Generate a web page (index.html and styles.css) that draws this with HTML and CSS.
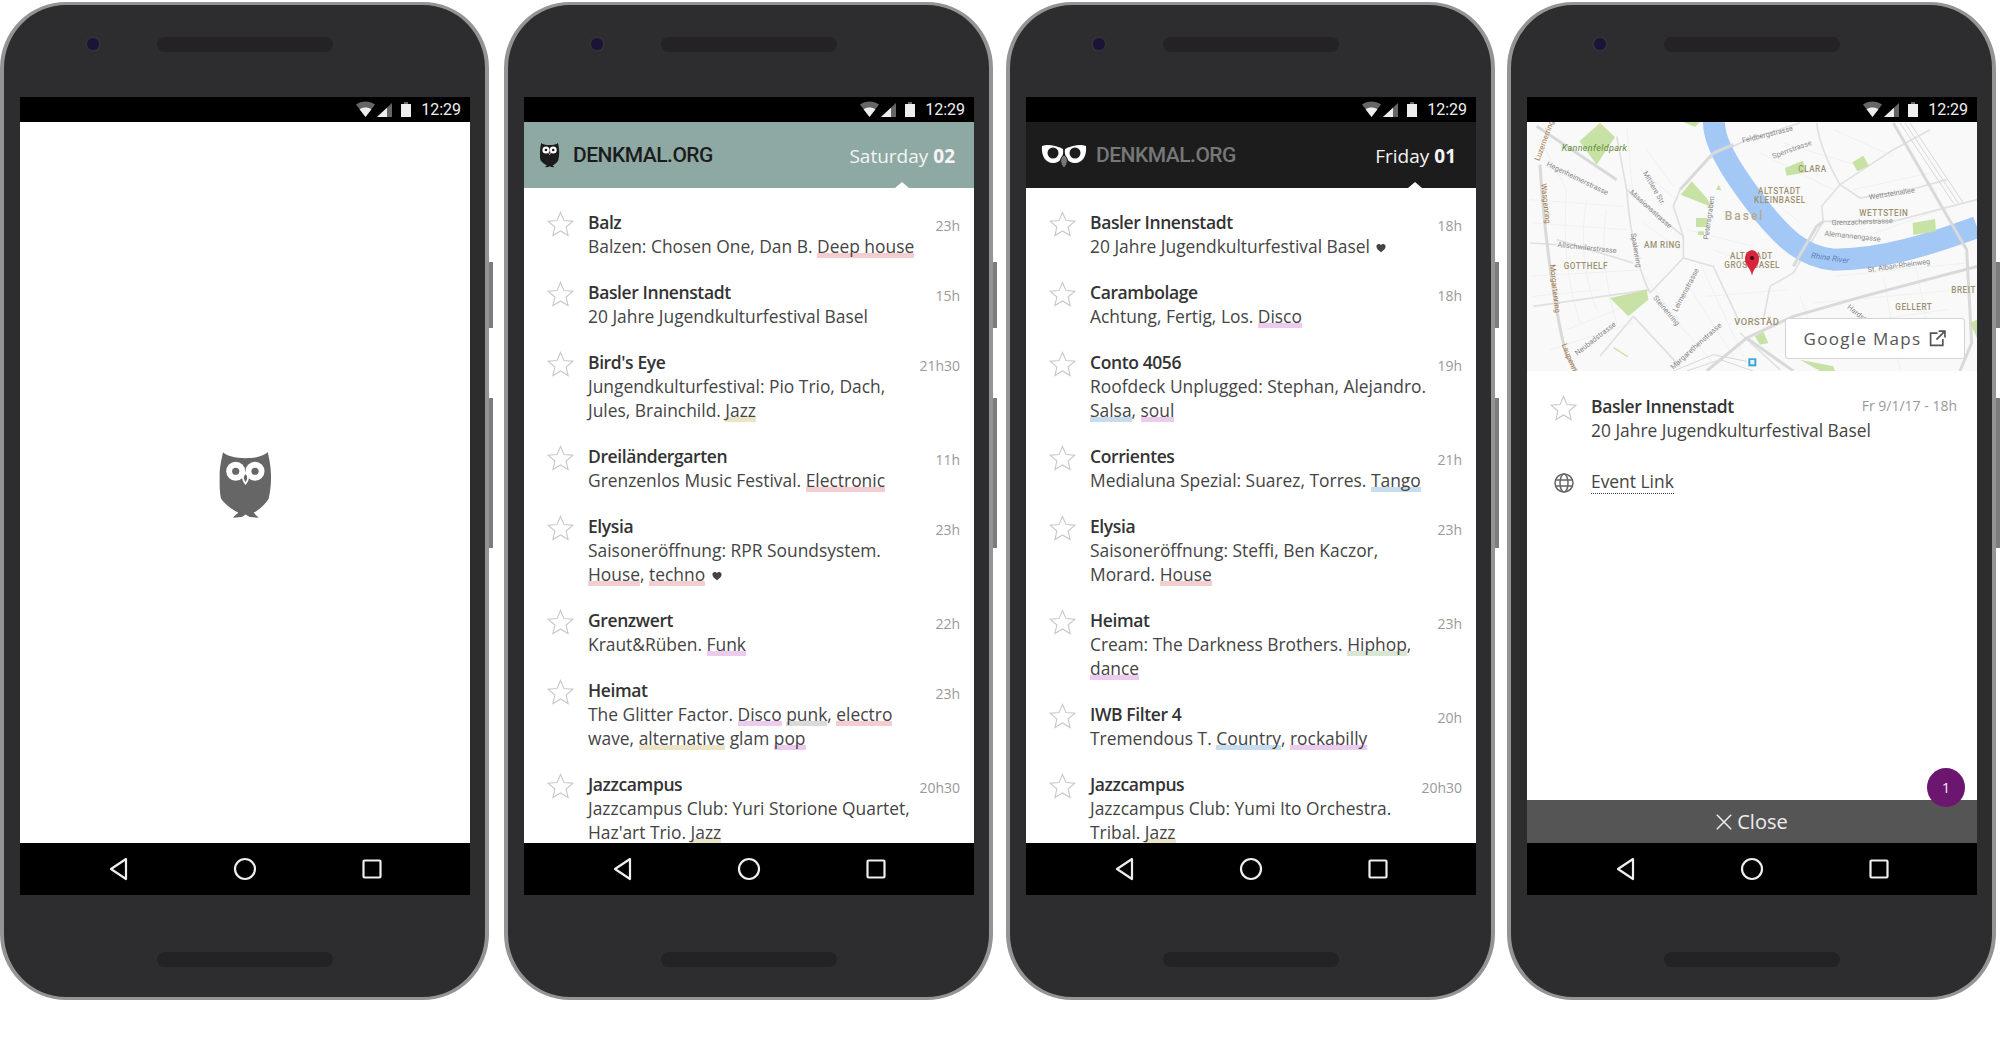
FILE: index.html
```html
<!DOCTYPE html>
<html lang="en">
<head>
<meta charset="utf-8">
<title>Denkmal.org</title>
<link rel="stylesheet" href="styles.css">
</head>
<body>
<svg class="defs" width="0" height="0" aria-hidden="true">
  <defs>
    <symbol id="star" viewBox="0 0 27 26">
      <path class="star-line" d="M13.5 1.5 L17 9.6 L25.7 10.3 L19.1 16 L21.1 24.5 L13.5 20 L5.9 24.5 L7.9 16 L1.3 10.3 L10 9.6 Z"/>
    </symbol>
    <symbol id="heart" viewBox="0 0 10 10">
      <path class="heart-fill" d="M5 9.2 C3 7.6 .4 5.8 .4 3.4 C.4 1.8 1.6 .9 2.8 .9 C3.8 .9 4.6 1.4 5 2.3 C5.4 1.4 6.2 .9 7.2 .9 C8.4 .9 9.6 1.8 9.6 3.4 C9.6 5.8 7 7.6 5 9.2 Z"/>
    </symbol>
    <symbol id="status" viewBox="0 0 56 18">
      <path class="st-dim" d="M0 3.6 C5.5 -.6 13.5 -.6 19 3.6 L9.5 16 Z"/>
      <path class="st-on" d="M3.6 8.2 C7 5.8 12 5.8 15.4 8.2 L9.5 16 Z"/>
      <path class="st-dim" d="M21 16 L36 2 L36 16 Z"/>
      <path class="st-on" d="M21 16 L31 6.7 L31 16 Z"/>
      <path class="st-dim" d="M48 1 H52 V3 H48 Z"/>
      <path class="st-on" d="M45 3 H55 V16 H45 Z"/>
    </symbol>
    <symbol id="owl" viewBox="0 0 180 220">
      <path d="M18 7 C30 18 55 25 87 25 C120 25 142 18 155 7 C160 30 165 52 165 82 C165 110 162 130 158 148 C146 168 128 182 112 192 C118 198 124 202 127 207 L100 205 L87 197 L76 205 L49 207 C53 201 59 197 65 192 C46 182 24 166 12 148 C7 125 8 100 8 80 C8 50 14 30 18 7 Z"/>
      <circle class="owl-white" cx="57" cy="65" r="29"/>
      <circle class="owl-white" cx="116" cy="65" r="29"/>
      <circle class="owl-pupil" cx="57" cy="65" r="11"/>
      <circle class="owl-pupil" cx="116" cy="65" r="11"/>
      <path class="owl-beak" d="M87 103 C78 92 76 80 87 70 C98 80 96 92 87 103 Z"/>
    </symbol>
  </defs>
</svg>

<main class="stage">

  <!-- Phone 1: splash -->
  <article class="phone">
    <div class="key key-power"></div>
    <div class="key key-volume"></div>
    <div class="bezel-top"><span class="camera"></span><span class="speaker"></span></div>
    <div class="screen">
      <div class="statusbar"><svg class="status-icons"><use href="#status"/></svg><span class="clock">12:29</span></div>
      <div class="view view-splash">
        <svg class="splash-owl"><use href="#owl"/></svg>
      </div>
      <div class="navbar">
        <svg class="nav-icons" viewBox="0 0 450 53"><path d="M106 16 L91 26 L106 36 Z"/><circle cx="225" cy="26" r="10"/><rect x="343.500" y="17.500" width="17" height="17" rx="1"/></svg>
      </div>
    </div>
    <div class="bezel-bottom"><span class="speaker"></span></div>
  </article>

  <!-- Phone 2: Saturday -->
  <article class="phone">
    <div class="key key-power"></div>
    <div class="key key-volume"></div>
    <div class="bezel-top"><span class="camera"></span><span class="speaker"></span></div>
    <div class="screen">
      <div class="statusbar"><svg class="status-icons"><use href="#status"/></svg><span class="clock">12:29</span></div>
      <div class="view">
        <header class="appbar appbar-light">
          <svg class="logo-owl"><use href="#owl"/></svg>
          <span class="brand">DENKMAL.ORG</span>
          <span class="date">Saturday <b>02</b></span>
        </header>
        <ul class="events">
          <li class="event"><svg class="star"><use href="#star"/></svg><div class="event-body"><div class="event-head"><h3>Balz</h3><time>23h</time></div><p>Balzen: Chosen One, Dan B. <span class="g-red">Deep house</span></p></div></li>
          <li class="event"><svg class="star"><use href="#star"/></svg><div class="event-body"><div class="event-head"><h3>Basler Innenstadt</h3><time>15h</time></div><p>20 Jahre Jugendkulturfestival Basel</p></div></li>
          <li class="event"><svg class="star"><use href="#star"/></svg><div class="event-body"><div class="event-head"><h3>Bird's Eye</h3><time>21h30</time></div><p>Jungendkulturfestival: Pio Trio, Dach, Jules, Brainchild. <span class="g-tan">Jazz</span></p></div></li>
          <li class="event"><svg class="star"><use href="#star"/></svg><div class="event-body"><div class="event-head"><h3>Dreiländergarten</h3><time>11h</time></div><p>Grenzenlos Music Festival. <span class="g-red">Electronic</span></p></div></li>
          <li class="event"><svg class="star"><use href="#star"/></svg><div class="event-body"><div class="event-head"><h3>Elysia</h3><time>23h</time></div><p>Saisoneröffnung: RPR Soundsystem. <span class="g-red">House</span>, <span class="g-red">techno</span> <svg class="heart"><use href="#heart"/></svg></p></div></li>
          <li class="event"><svg class="star"><use href="#star"/></svg><div class="event-body"><div class="event-head"><h3>Grenzwert</h3><time>22h</time></div><p>Kraut&amp;Rüben. <span class="g-purple">Funk</span></p></div></li>
          <li class="event"><svg class="star"><use href="#star"/></svg><div class="event-body"><div class="event-head"><h3>Heimat</h3><time>23h</time></div><p>The Glitter Factor. <span class="g-purple">Disco</span> <span class="g-grey">punk</span>, <span class="g-red">electro</span> wave, <span class="g-tan">alternative</span> glam <span class="g-purple">pop</span></p></div></li>
          <li class="event"><svg class="star"><use href="#star"/></svg><div class="event-body"><div class="event-head"><h3>Jazzcampus</h3><time>20h30</time></div><p>Jazzcampus Club: Yuri Storione Quartet, Haz'art Trio. <span class="g-tan">Jazz</span></p></div></li>
        </ul>
      </div>
      <div class="navbar">
        <svg class="nav-icons" viewBox="0 0 450 53"><path d="M106 16 L91 26 L106 36 Z"/><circle cx="225" cy="26" r="10"/><rect x="343.500" y="17.500" width="17" height="17" rx="1"/></svg>
      </div>
    </div>
    <div class="bezel-bottom"><span class="speaker"></span></div>
  </article>

  <!-- Phone 3: Friday -->
  <article class="phone">
    <div class="key key-power"></div>
    <div class="key key-volume"></div>
    <div class="bezel-top"><span class="camera"></span><span class="speaker"></span></div>
    <div class="screen">
      <div class="statusbar"><svg class="status-icons"><use href="#status"/></svg><span class="clock">12:29</span></div>
      <div class="view">
        <header class="appbar appbar-dark">
          <svg class="logo-eyes" viewBox="0 0 46 25">
            <path class="eyes-white" d="M1 3 C6 1 14 2 22 6 C23 12 20 20 12 20 C4 20 0 12 1 3 Z"/>
            <path class="eyes-white" d="M45 3 C40 1 32 2 24 6 C23 12 26 20 34 20 C42 20 46 12 45 3 Z"/>
            <circle class="eyes-pupil" cx="12" cy="10" r="5.500"/>
            <circle class="eyes-pupil" cx="34" cy="10" r="5.500"/>
            <path class="eyes-beak" d="M23 25 C19 21 18 15 23 12 C28 15 27 21 23 25 Z"/>
          </svg>
          <span class="brand">DENKMAL.ORG</span>
          <span class="date">Friday <b>01</b></span>
        </header>
        <ul class="events">
          <li class="event"><svg class="star"><use href="#star"/></svg><div class="event-body"><div class="event-head"><h3>Basler Innenstadt</h3><time>18h</time></div><p>20 Jahre Jugendkulturfestival Basel <svg class="heart"><use href="#heart"/></svg></p></div></li>
          <li class="event"><svg class="star"><use href="#star"/></svg><div class="event-body"><div class="event-head"><h3>Carambolage</h3><time>18h</time></div><p>Achtung, Fertig, Los. <span class="g-purple">Disco</span></p></div></li>
          <li class="event"><svg class="star"><use href="#star"/></svg><div class="event-body"><div class="event-head"><h3>Conto 4056</h3><time>19h</time></div><p>Roofdeck Unplugged: Stephan, Alejandro. <span class="g-blue">Salsa</span>, <span class="g-purple">soul</span></p></div></li>
          <li class="event"><svg class="star"><use href="#star"/></svg><div class="event-body"><div class="event-head"><h3>Corrientes</h3><time>21h</time></div><p>Medialuna Spezial: Suarez, Torres. <span class="g-blue">Tango</span></p></div></li>
          <li class="event"><svg class="star"><use href="#star"/></svg><div class="event-body"><div class="event-head"><h3>Elysia</h3><time>23h</time></div><p>Saisoneröffnung: Steffi, Ben Kaczor, Morard. <span class="g-red">House</span></p></div></li>
          <li class="event"><svg class="star"><use href="#star"/></svg><div class="event-body"><div class="event-head"><h3>Heimat</h3><time>23h</time></div><p>Cream: The Darkness Brothers. <span class="g-green">Hiphop</span>, <span class="g-purple">dance</span></p></div></li>
          <li class="event"><svg class="star"><use href="#star"/></svg><div class="event-body"><div class="event-head"><h3>IWB Filter 4</h3><time>20h</time></div><p>Tremendous T. <span class="g-blue">Country</span>, <span class="g-purple">rockabilly</span></p></div></li>
          <li class="event"><svg class="star"><use href="#star"/></svg><div class="event-body"><div class="event-head"><h3>Jazzcampus</h3><time>20h30</time></div><p>Jazzcampus Club: Yumi Ito Orchestra. Tribal. <span class="g-tan">Jazz</span></p></div></li>
        </ul>
      </div>
      <div class="navbar">
        <svg class="nav-icons" viewBox="0 0 450 53"><path d="M106 16 L91 26 L106 36 Z"/><circle cx="225" cy="26" r="10"/><rect x="343.500" y="17.500" width="17" height="17" rx="1"/></svg>
      </div>
    </div>
    <div class="bezel-bottom"><span class="speaker"></span></div>
  </article>

  <!-- Phone 4: detail -->
  <article class="phone">
    <div class="key key-power"></div>
    <div class="key key-volume"></div>
    <div class="bezel-top"><span class="camera"></span><span class="speaker"></span></div>
    <div class="screen">
      <div class="statusbar"><svg class="status-icons"><use href="#status"/></svg><span class="clock">12:29</span></div>
      <div class="view view-detail">
        <div class="map">
          <svg class="map-art" viewBox="81 97 1350 747" preserveAspectRatio="none">
            <rect class="m-bg" x="81" y="97" width="1350" height="747"/>
            <g class="m-minor">
              <path d="M200 300 C190 420 195 560 240 700 M260 330 C240 440 250 560 290 660 M320 360 C300 470 320 600 350 700"/>
              <path d="M90 330 L370 350 M100 400 L380 420 M90 560 L430 540 M100 620 L300 600 M200 720 L400 640 M150 780 L400 700"/>
              <path d="M600 520 L740 820 M560 580 L700 800 M480 640 L640 820 M640 480 L800 540 M560 420 L760 470 M620 620 L860 600"/>
              <path d="M700 230 L900 400 M780 190 L1000 300 M850 160 L1080 230 M1000 120 L1180 200 M1060 300 L1290 250 M1100 440 L1320 360"/>
              <path d="M1000 560 L1400 520 M940 640 L1380 600 M1060 700 L1340 660 M1150 560 L1200 840 M1250 540 L1300 800 M900 620 L960 780"/>
              <path d="M420 240 L530 330 M440 180 L520 290 M380 110 L400 330 M110 130 L200 300 M420 540 L540 700 M430 400 L540 480"/>
            </g>
            <g class="m-road-thin">
              <path d="M100 650 L450 600 M170 450 L400 520 M90 460 L170 465 M350 140 L380 300 M380 300 L550 440 M380 300 C390 430 410 530 450 610"/>
              <path d="M540 300 L620 210 L740 150 L900 100 M540 300 L520 350 L550 440 L550 505 L450 610"/>
              <path d="M950 100 C960 180 1000 250 1020 285 L965 350 L970 395 L880 550 L810 590 L790 690"/>
              <path d="M1020 285 L1180 180 L1290 120 M1020 285 L1080 325 L1250 295 L1340 270"/>
              <path d="M970 395 L1180 395 L1431 330 M550 505 L640 530 L720 700 M400 680 L540 830 M400 680 L300 800 M720 730 L840 840"/>
            </g>
            <path class="m-river" d="M642 97 C640 170 720 280 790 370 C840 430 900 500 1000 510 C1150 510 1300 460 1431 412"/>
            <g class="m-road">
              <path d="M120 225 C130 400 160 650 200 800 L230 844"/>
              <path d="M110 110 L350 270 M1180 100 L1400 480 L1415 760 L1380 844"/>
              <path d="M640 190 L700 165 M540 300 L640 190 M620 844 L740 745 L880 680 L1090 620 L1431 530"/>
              <path d="M880 530 L950 410 L970 395 M740 745 L880 844"/>
            </g>
            <g class="m-road-rail">
              <path d="M1200 100 L1360 340 M1215 100 L1375 340 M1230 100 L1390 340 M520 844 L640 795 L740 815 M560 844 L660 810 L760 844"/>
            </g>
            <g class="m-park">
              <path d="M238 155 L300 100 L345 142 L290 225 Z"/>
              <path d="M542 315 L575 275 L620 325 L635 352 Z"/>
              <path d="M588 385 H622 V412 H588 Z"/>
              <path d="M594 425 H612 V436 H594 Z"/>
              <path d="M648 300 L656 285 L665 302 Z"/>
              <path d="M855 235 L908 213 L920 248 L860 258 Z"/>
              <path d="M1057 218 L1090 198 L1107 228 L1072 245 Z"/>
              <path d="M1238 400 L1305 388 L1308 425 L1240 436 Z"/>
              <path d="M330 625 L440 600 L445 630 L385 680 Z"/>
              <path d="M342 772 L385 800 L382 803 L340 776 Z"/>
              <path d="M765 740 L790 726 L805 760 L780 765 Z"/>
              <path d="M900 810 L1000 830 L1005 844 L960 844 Z"/>
              <path d="M550 97 H600 L585 112 Z"/>
              <path d="M1410 700 L1431 690 V745 Z"/>
            </g>
            <g class="m-hood">
              <text class="m-sp" x="774" y="314">ALTSTADT</text>
              <text class="m-sp" x="762" y="340">KLEINBASEL</text>
              <text class="m-sp" x="895" y="246">CLARA</text>
              <text class="m-sp" x="1078" y="379">WETTSTEIN</text>
              <text class="m-sp" x="432" y="474">AM RING</text>
              <text class="m-sp" x="191" y="538">GOTTHELF</text>
              <text class="m-sp" x="690" y="508">ALTSTADT</text>
              <text class="m-sp" x="673" y="534">GROSSBASEL</text>
              <text class="m-sp" x="1186" y="660">GELLERT</text>
              <text class="m-sp" x="1354" y="609">BREIT</text>
              <text class="m-sp m-big" x="703" y="705">VORSTÄD</text>
              <text class="m-city" x="674" y="392">Basel</text>
            </g>
            <g class="m-label">
              <text transform="translate(728 160) rotate(-14)">Feldbergstrasse</text>
              <text transform="translate(820 207) rotate(-20)">Sperrstrasse</text>
              <text transform="translate(1108 330) rotate(-9)">Wettsteinallee</text>
              <text transform="translate(995 407) rotate(-2)">Grenzacherstrasse</text>
              <text transform="translate(973 438) rotate(6)">Alemannengasse</text>
              <text transform="translate(1104 548) rotate(-8)">St. Alban-Rheinweg</text>
              <text transform="translate(428 250) rotate(60)">Mittlere Str.</text>
              <text transform="translate(388 310) rotate(42)">Missionsstrasse</text>
              <text transform="translate(138 228) rotate(26)">Hegenheimerstrasse</text>
              <text transform="translate(172 472) rotate(6)">Allschwilerstrasse</text>
              <text transform="translate(392 432) rotate(80)">Spalenring</text>
              <text transform="translate(625 450) rotate(-82)">Petersgraben</text>
              <text transform="translate(530 668) rotate(-62)">Leimenstrasse</text>
              <text transform="translate(458 625) rotate(50)">Steinenring</text>
              <text transform="translate(232 798) rotate(-38)">Neubadstrasse</text>
              <text transform="translate(1040 655) rotate(38)">Hardstrasse</text>
              <text transform="translate(520 840) rotate(-42)">Margarethenstrasse</text>
            </g>
            <g class="m-label-brown">
              <text transform="translate(118 215) rotate(-70)">Luzernerring</text>
              <text transform="translate(124 282) rotate(84)">Wasgenring</text>
              <text transform="translate(150 525) rotate(84)">Morgartenring</text>
              <text transform="translate(185 765) rotate(68)">Laupenring</text>
            </g>
            <text class="m-park-label" x="185" y="184">Kannenfeldpark</text>
            <text class="m-water" transform="translate(932 505) rotate(8)">Rhine River</text>
            <path class="m-transit" d="M745 806 H769 V830 H745 Z"/>
            <path class="m-transit-in" d="M751 811 H763 V824 H751 Z"/>
            <path class="m-pin" d="M756 558 C750 530 735 530 735 508 C735 490 748 482 756 482 C764 482 777 490 777 508 C777 530 762 530 756 558 Z"/>
            <circle class="m-pin-dot" cx="756" cy="505" r="6"/>
          </svg>
          <a class="maps-button">Google Maps
            <svg class="ext-icon" viewBox="0 0 16 16"><path d="M8 3 H1.500 V14.500 H13 V8.500 M9 1 H15 V7 M15 1 L7 9"/></svg>
          </a>
        </div>
        <div class="event event-detail"><svg class="star"><use href="#star"/></svg><div class="event-body event-body-wide"><div class="event-head"><h3>Basler Innenstadt</h3><time>Fr 9/1/17 - 18h</time></div><p>20 Jahre Jugendkulturfestival Basel</p></div></div>
        <div class="link-row">
          <svg class="globe" viewBox="0 0 20 20"><circle cx="10" cy="10" r="9"/><ellipse cx="10" cy="10" rx="4" ry="9"/><path d="M1 7 H19 M1 13 H19"/></svg>
          <a class="event-link">Event Link</a>
        </div>
        <div class="spacer"></div>
        <span class="badge">1</span>
        <div class="closebar">
          <svg class="close-x" viewBox="0 0 16 16"><path d="M.8 .8 L15.200 15.200 M15.200 .8 L.8 15.200"/></svg>
          <span>Close</span>
        </div>
      </div>
      <div class="navbar">
        <svg class="nav-icons" viewBox="0 0 450 53"><path d="M106 16 L91 26 L106 36 Z"/><circle cx="225" cy="26" r="10"/><rect x="343.500" y="17.500" width="17" height="17" rx="1"/></svg>
      </div>
    </div>
    <div class="bezel-bottom"><span class="speaker"></span></div>
  </article>
</main>
</body>
</html>
```

FILE: styles.css
```css
* { box-sizing: border-box; }
html, body { margin: 0; padding: 0; background: #fff; }
body { height: 1039px; overflow: hidden; font-family: "Open Sans", "Noto Sans", sans-serif; }
.defs { position: absolute; }

.stage {
  display: grid;
  grid-template-columns: 504px 502px 501px 489px;
  padding-top: 2px;
}

/* Device */
.phone {
  position: relative;
  width: 489px;
  height: 998px;
  display: flex;
  flex-direction: column;
  padding: 0 15px 0 16px;
  background: #2d2c2e;
  border: solid #949494;
  border-width: 3px 4px;
  border-radius: 66px;
}
.key { position: absolute; left: calc(100% + 4px); width: 4px; background: #7d7d7d; }
.key-power { top: 257px; height: 66px; }
.key-volume { top: 393px; height: 150px; }

.bezel-top {
  height: 92px;
  display: flex;
  align-items: flex-start;
  padding: 32px 0 0 67px;
  gap: 58px;
}
.camera {
  width: 12px;
  height: 12px;
  margin-top: 1px;
  border-radius: 50%;
  background: #1b1338;
  box-shadow: 0 0 0 2px #333136;
}
.speaker {
  display: block;
  width: 176px;
  height: 15px;
  border-radius: 8px;
  background: #242225;
}
.bezel-bottom { flex: 1; display: flex; justify-content: center; padding-top: 57px; }

.screen { flex: none; width: 450px; height: 798px; display: flex; flex-direction: column; }
.statusbar {
  flex: none;
  height: 25px;
  background: #000;
  display: flex;
  align-items: center;
  justify-content: flex-end;
  padding-right: 9px;
}
.status-icons { width: 56px; height: 18px; margin-right: 9px; }
.st-on { fill: #eee; }
.st-dim { fill: #666; }
.clock { font: 400 16px/25px Roboto, sans-serif; color: #eee; }

.view { position: relative; flex: none; height: 721px; background: #fff; overflow: hidden; }
.view-splash { display: flex; justify-content: center; padding-top: 328px; }
.splash-owl { width: 59px; height: 72px; margin-left: 3px; fill: #666; color: #666; }
.owl-white { fill: #fff; }
.owl-pupil { fill: currentColor; }
.owl-beak { fill: currentColor; stroke: #fff; stroke-width: 5; }

.navbar { flex: none; height: 52px; background: #000; }
.nav-icons { display: block; width: 450px; height: 53px; fill: none; stroke: #eee; stroke-width: 2.200; stroke-linejoin: round; }

/* App bar */
.appbar {
  position: relative;
  height: 66px;
  display: flex;
  align-items: center;
  padding: 0 14px 0 15px;
}
.appbar::after {
  content: "";
  position: absolute;
  bottom: 0;
  width: 0;
  height: 0;
  border: solid transparent;
  border-width: 0 7px 6px;
  border-bottom-color: #fff;
}
.appbar-light { background: #8ea9a3; }
.appbar-light::after { right: 65px; }
.appbar-dark { background: #1c1c1c; }
.appbar-dark::after { right: 54px; }
.logo-owl { width: 22px; height: 27px; fill: #1c1c1c; color: #1c1c1c; margin-right: 12px; }
.logo-eyes { width: 46px; height: 25px; margin-right: 9px; overflow: visible; }
.eyes-white { fill: #fff; }
.eyes-pupil { fill: #1c1c1c; }
.eyes-beak { fill: #777; stroke: #1c1c1c; stroke-width: 1; }
.brand { font: 500 21px/1 Roboto, sans-serif; letter-spacing: -.5px; }
.appbar-light .brand { color: #1c1c1c; }
.appbar-dark .brand { color: #777; }
.date { margin-left: auto; padding-top: 1px; font-size: 19px; color: #f4f4f4; }
.date b { font-weight: 700; }
.appbar-light .date { padding-right: 5px; }
.appbar-dark .date { padding-right: 6px; }

/* Event rows */
.events { list-style: none; margin: 0; padding: 22px 0 0; }
.event { display: flex; padding: 0 14px 22px 23px; }
.star { flex: none; width: 27px; height: 26px; margin: 1px 14px 0 0; }
.star-line { fill: none; stroke: #c8c8c8; stroke-width: 1.100; }
.event-body { flex: 1; min-width: 0; }
.event-head { display: flex; justify-content: space-between; }
.event h3 { margin: 0; font-size: 17.500px; line-height: 24px; font-weight: 600; letter-spacing: -.4px; color: #333; }
.event time { font-size: 14px; line-height: 32px; height: 24px; color: #999; white-space: nowrap; }
.event p { margin: 0; max-width: 340px; font-size: 17.400px; line-height: 24px; color: #444; }
.heart { width: 10px; height: 10px; margin-left: 2px; }
.heart-fill { fill: #444; }

.g-red, .g-purple, .g-tan, .g-blue, .g-green, .g-grey {
  background-repeat: no-repeat;
  background-position: 0 100%;
  background-size: 100% 5px;
  -webkit-box-decoration-break: clone;
  box-decoration-break: clone;
}
.g-red { background-image: linear-gradient(#f3cdd0, #f3cdd0); }
.g-purple { background-image: linear-gradient(#eccbef, #eccbef); }
.g-tan { background-image: linear-gradient(#ebe5c5, #ebe5c5); }
.g-blue { background-image: linear-gradient(#c8dcef, #c8dcef); }
.g-green { background-image: linear-gradient(#d8e6d3, #d8e6d3); }
.g-grey { background-image: linear-gradient(#dadada, #dadada); }

/* Detail */
.view-detail { display: flex; flex-direction: column; }
.map { position: relative; flex: none; height: 249px; overflow: hidden; }
.map-art { display: block; width: 450px; height: 249px; }
.m-bg { fill: #f9f9f9; }
.m-minor { fill: none; stroke: #eeeeee; stroke-width: 2.500; }
.m-road-thin { fill: none; stroke: #e0e0e0; stroke-width: 5; }
.m-road { fill: none; stroke: #d9d9d9; stroke-width: 9; }
.m-road-rail { fill: none; stroke: #d8d8d8; stroke-width: 3; }
.m-river { fill: none; stroke: #a4c8f6; stroke-width: 66; }
.m-park { fill: #c8e2a5; }
.m-hood { fill: #9c8f70; font: 500 24.500px "Roboto", sans-serif; letter-spacing: 1.500px; }
.m-big { font-size: 28px; }
.m-city { font-size: 36px; letter-spacing: 6px; fill: #b3a98d; }
.m-label { fill: #8a8a8a; font: 400 22px Roboto, sans-serif; }
.m-label-brown { fill: #a3784a; font: 400 23px Roboto, sans-serif; }
.m-park-label { fill: #5e8a35; font: italic 400 27px Roboto, sans-serif; letter-spacing: 1px; }
.m-water { fill: #5a83b8; font: italic 400 24px Roboto, sans-serif; }
.m-transit { fill: #3aa5dc; }
.m-transit-in { fill: #e8f4fb; }
.m-pin { fill: #d8243c; }
.m-pin-dot { fill: #3a0a10; }

.maps-button {
  position: absolute;
  right: 12px;
  top: 196px;
  width: 180px;
  height: 41px;
  display: flex;
  align-items: center;
  justify-content: center;
  gap: 8px;
  background: #fff;
  border: 1px solid #d4d4d4;
  border-radius: 3px;
  font-size: 17px;
  letter-spacing: 1.300px;
  color: #555;
}
.ext-icon { width: 17px; height: 17px; fill: none; stroke: #555; stroke-width: 1.600; }

.event-detail { padding: 23px 20px 0 23px; }
.event-body-wide p { max-width: none; }
.event-detail time { line-height: 24px; }
.link-row { display: flex; align-items: center; margin-top: 27px; padding-left: 27px; }
.globe { flex: none; width: 20px; height: 20px; margin: 3px 17px 0 0; fill: none; stroke: #666; stroke-width: 1.500; }
.event-link { font-size: 17.400px; line-height: 24px; color: #444; border-bottom: 1px dotted #444; }
.spacer { flex: 1; }
.closebar {
  flex: none;
  height: 43px;
  display: flex;
  align-items: center;
  justify-content: center;
  gap: 5px;
  background: #555;
  color: #eee;
  font-size: 20px;
}
.close-x { width: 16px; height: 16px; fill: none; stroke: #eee; stroke-width: 1.500; }
.badge {
  position: absolute;
  right: 12px;
  bottom: 36px;
  z-index: 2;
  width: 38px;
  height: 39px;
  border-radius: 50%;
  background: #6d1670;
  color: #eee;
  font-size: 15px;
  line-height: 39px;
  text-align: center;
}
```
